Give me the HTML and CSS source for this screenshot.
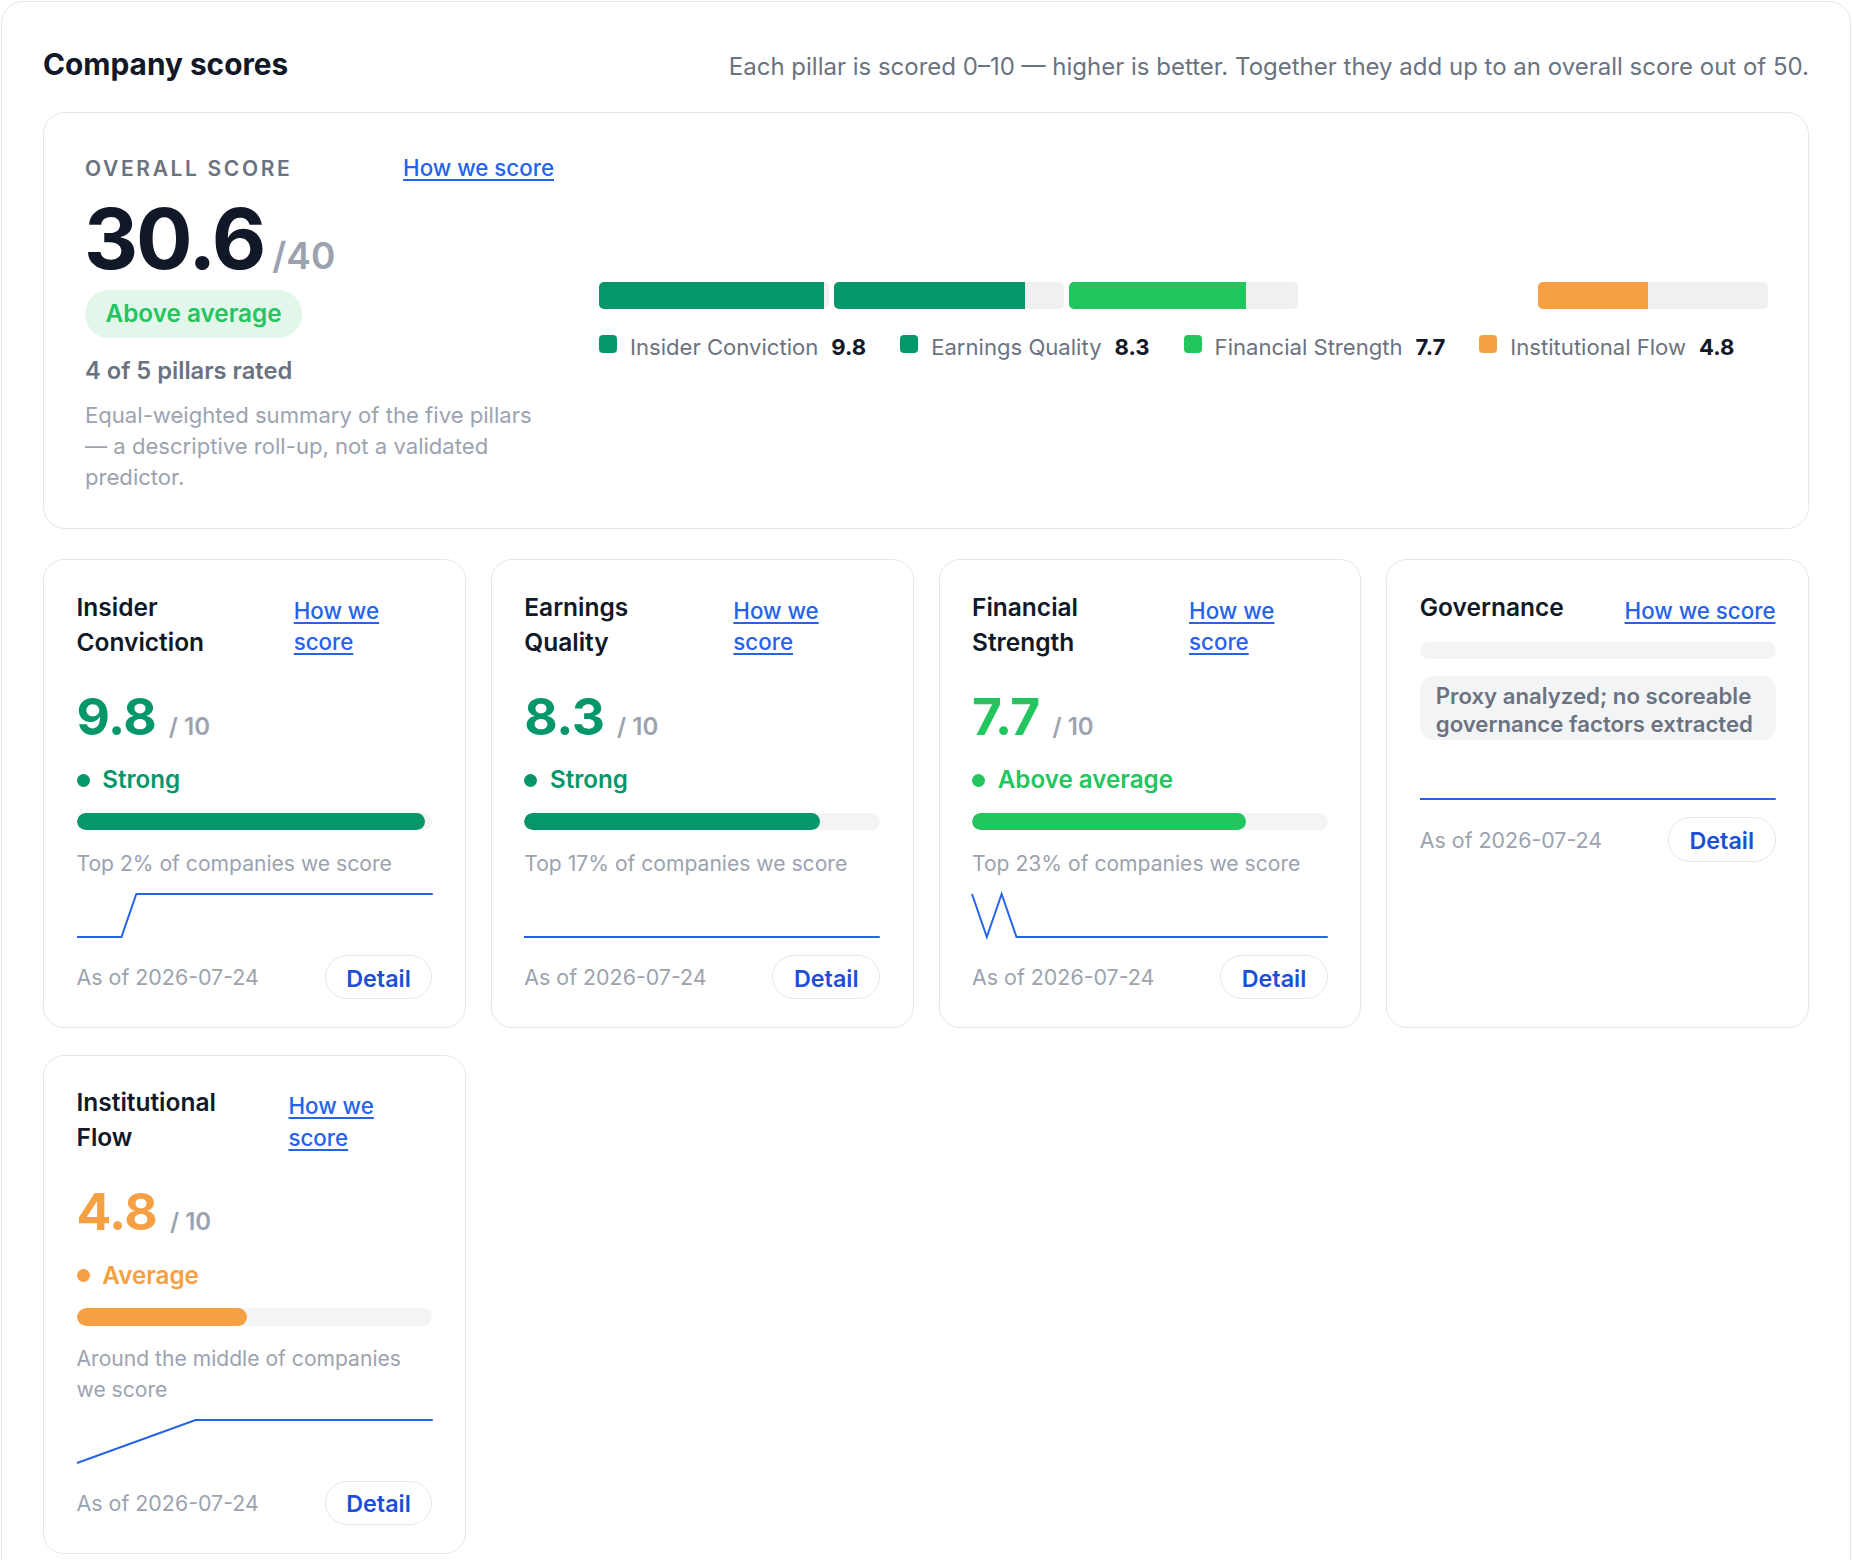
FILE: index.html
```html
<!DOCTYPE html>
<html lang="en">
<head>
<meta charset="utf-8">
<title>Company scores</title>
<link rel="stylesheet" href="styles.css">
</head>
<body>
<div class="panel">
  <div class="panel-head">
    <h2 class="panel-title">Company scores</h2>
    <p class="panel-desc">Each pillar is scored 0–10 — higher is better. Together they add up to an overall score out of 50.</p>
  </div>

  <section class="overall">
    <div class="overall-left">
      <div class="overall-top">
        <span class="eyebrow">OVERALL SCORE</span>
        <a class="how" href="#">How we score</a>
      </div>
      <div class="big-score"><span class="big-num">30.6</span><span class="big-den">/40</span></div>
      <span class="badge">Above average</span>
      <div class="rated">4 of 5 pillars rated</div>
      <p class="overall-note">Equal-weighted summary of the five pillars — a descriptive roll-up, not a validated predictor.</p>
    </div>
    <div class="overall-right">
      <div class="stack">
        <div class="seg"><div class="seg-fill c-emerald" style="width:98%"></div></div>
        <div class="seg"><div class="seg-fill c-emerald" style="width:83%"></div></div>
        <div class="seg"><div class="seg-fill c-green" style="width:77%"></div></div>
        <div class="seg seg-empty"></div>
        <div class="seg"><div class="seg-fill c-orange" style="width:48%"></div></div>
      </div>
      <div class="legend">
        <span class="lg"><i class="sw c-emerald"></i><span class="lg-label">Insider Conviction</span><b class="lg-val">9.8</b></span>
        <span class="lg"><i class="sw c-emerald"></i><span class="lg-label">Earnings Quality</span><b class="lg-val">8.3</b></span>
        <span class="lg"><i class="sw c-green"></i><span class="lg-label">Financial Strength</span><b class="lg-val">7.7</b></span>
        <span class="lg"><i class="sw c-orange"></i><span class="lg-label">Institutional Flow</span><b class="lg-val">4.8</b></span>
      </div>
    </div>
  </section>

  <div class="cards">
    <article class="card">
      <div class="card-head">
        <h3 class="card-title">Insider Conviction</h3>
        <a class="how" href="#">How we score</a>
      </div>
      <div class="score"><span class="score-num t-emerald">9.8</span><span class="score-den">/ 10</span></div>
      <div class="status t-emerald"><i class="dot c-emerald"></i>Strong</div>
      <div class="meter"><div class="meter-fill c-emerald" style="width:98%"></div></div>
      <p class="rank">Top 2% of companies we score</p>
      <svg class="spark" viewBox="0 0 24 47" preserveAspectRatio="none"><polyline points="0,45 3,45 4,2 24,2"/></svg>
      <div class="card-foot"><span class="asof">As of 2026-07-24</span><button class="detail" type="button">Detail</button></div>
    </article>

    <article class="card">
      <div class="card-head">
        <h3 class="card-title">Earnings Quality</h3>
        <a class="how" href="#">How we score</a>
      </div>
      <div class="score"><span class="score-num t-emerald">8.3</span><span class="score-den">/ 10</span></div>
      <div class="status t-emerald"><i class="dot c-emerald"></i>Strong</div>
      <div class="meter"><div class="meter-fill c-emerald" style="width:83%"></div></div>
      <p class="rank">Top 17% of companies we score</p>
      <svg class="spark" viewBox="0 0 24 47" preserveAspectRatio="none"><polyline points="0,45 24,45"/></svg>
      <div class="card-foot"><span class="asof">As of 2026-07-24</span><button class="detail" type="button">Detail</button></div>
    </article>

    <article class="card">
      <div class="card-head">
        <h3 class="card-title">Financial Strength</h3>
        <a class="how" href="#">How we score</a>
      </div>
      <div class="score"><span class="score-num t-green">7.7</span><span class="score-den">/ 10</span></div>
      <div class="status t-green"><i class="dot c-green"></i>Above average</div>
      <div class="meter"><div class="meter-fill c-green" style="width:77%"></div></div>
      <p class="rank">Top 23% of companies we score</p>
      <svg class="spark" viewBox="0 0 24 47" preserveAspectRatio="none"><polyline points="0,2 1,45 2,2 3,45 24,45"/></svg>
      <div class="card-foot"><span class="asof">As of 2026-07-24</span><button class="detail" type="button">Detail</button></div>
    </article>

    <article class="card">
      <div class="card-head">
        <h3 class="card-title">Governance</h3>
        <a class="how" href="#">How we score</a>
      </div>
      <div class="meter meter-empty"></div>
      <p class="gov-note">Proxy analyzed; no scoreable governance factors extracted</p>
      <svg class="spark spark-gov" viewBox="0 0 24 47" preserveAspectRatio="none"><polyline points="0,45 24,45"/></svg>
      <div class="card-foot foot-gov"><span class="asof">As of 2026-07-24</span><button class="detail" type="button">Detail</button></div>
    </article>

    <article class="card">
      <div class="card-head">
        <h3 class="card-title">Institutional Flow</h3>
        <a class="how" href="#">How we score</a>
      </div>
      <div class="score"><span class="score-num t-orange">4.8</span><span class="score-den">/ 10</span></div>
      <div class="status t-orange"><i class="dot c-orange"></i>Average</div>
      <div class="meter"><div class="meter-fill c-orange" style="width:48%"></div></div>
      <p class="rank">Around the middle of companies we score</p>
      <svg class="spark" viewBox="0 0 24 47" preserveAspectRatio="none"><polyline points="0,45 8,2 24,2"/></svg>
      <div class="card-foot"><span class="asof">As of 2026-07-24</span><button class="detail" type="button">Detail</button></div>
    </article>
  </div>
</div>
</body>
</html>
```

FILE: styles.css
```css
* { box-sizing: border-box; }

html, body {
  margin: 0;
  padding: 0;
  background: #ffffff;
}

body {
  font-family: Inter, "Noto Sans", "Liberation Sans", sans-serif;
  color: #111827;
}

/* colours */
.c-emerald { background: #059669; }
.c-green { background: #22c55e; }
.c-orange { background: #f5a043; }
.t-emerald { color: #059669; }
.t-green { color: #22c55e; }
.t-orange { color: #f5a043; }

.panel {
  margin: 1px 1px 0 1px;
  border: 1px solid #e5e7eb;
  border-radius: 22px;
  padding: 44.2px 41px 45px 41px;
  background: #ffffff;
}

.panel-head {
  display: flex;
  justify-content: space-between;
  align-items: baseline;
  margin-bottom: 28.3px;
}

.panel-title {
  margin: 0;
  font-size: 29.8px;
  line-height: 37px;
  font-weight: 700;
  color: #111827;
}

.panel-desc {
  margin: 0;
  font-size: 24px;
  line-height: 34px;
  color: #6b7280;
}

.how {
  color: #2563eb;
  font-size: 22.3px;
  line-height: 31.5px;
  font-weight: 500;
  text-decoration: underline;
  text-underline-offset: 3px;
  text-decoration-thickness: 1.5px;
}

/* overall card */
.overall {
  display: grid;
  grid-template-columns: 469px 1fr;
  column-gap: 45px;
  align-items: center;
  border: 1px solid #e5e7eb;
  border-radius: 22px;
  padding: 38.9px 40px 35px 41px;
}

.overall-left {
  display: flex;
  flex-direction: column;
  align-items: flex-start;
}

.overall-top {
  align-self: stretch;
  display: flex;
  justify-content: space-between;
  align-items: baseline;
}

.eyebrow {
  font-size: 21px;
  line-height: 31.5px;
  font-weight: 600;
  letter-spacing: 2.65px;
  color: #6b7280;
}

.big-score {
  margin-top: 12.3px;
  display: flex;
  align-items: baseline;
  gap: 8.2px;
}

.big-num {
  font-size: 84px;
  line-height: 84px;
  font-weight: 700;
  letter-spacing: -0.025em;
  color: #111827;
  margin-left: -1px;
}

.big-den {
  font-size: 37px;
  line-height: 37px;
  font-weight: 600;
  color: #9ca3af;
}

.badge {
  margin-top: 9.3px;
  padding: 6px 20.5px;
  line-height: 35.5px;
  font-size: 24.3px;
  font-weight: 600;
  color: #22c55e;
  background: #e3f6ea;
  border-radius: 999px;
}

.rated {
  margin-top: 16.9px;
  font-size: 23.7px;
  line-height: 31.5px;
  font-weight: 600;
  color: #6b7280;
}

.overall-note {
  margin: 13.6px 0 0 0;
  font-size: 22.1px;
  line-height: 31px;
  color: #9ca3af;
}

.stack {
  display: flex;
  gap: 5px;
  height: 27px;
}

.seg {
  flex: 1 1 0;
  background: #eff0f2;
  border-radius: 5px;
  overflow: hidden;
}

.seg-empty { background: transparent; }

.seg-fill { height: 100%; }

.legend {
  display: flex;
  column-gap: 34px;
  margin-top: 22.2px;
  font-size: 22.1px;
  line-height: 31.5px;
  white-space: nowrap;
}

.lg {
  display: flex;
  align-items: flex-start;
  gap: 13px;
}

.sw {
  display: block;
  width: 18px;
  height: 18px;
  border-radius: 4px;
  margin-top: 3.8px;
}

.lg-label { color: #6b7280; }

.lg-val {
  font-weight: 700;
  color: #111827;
}

/* pillar cards */
.cards {
  display: grid;
  grid-template-columns: repeat(4, 1fr);
  column-gap: 25px;
  row-gap: 27px;
  margin-top: 30.3px;
}

.card {
  border: 1px solid #e5e7eb;
  border-radius: 21px;
  padding: 29.3px 32.5px 27.5px 32.5px;
  display: flex;
  flex-direction: column;
}

.card-head {
  display: flex;
  justify-content: space-between;
  align-items: flex-start;
  gap: 20px;
}

.card-title {
  margin: 0;
  font-size: 24.5px;
  line-height: 35px;
  font-weight: 600;
  color: #111827;
}

.card-head .how { margin-top: 5.2px; }

.score {
  margin-top: 31.2px;
  display: flex;
  align-items: baseline;
  gap: 12.7px;
}

.score-num {
  font-size: 51.5px;
  line-height: 51.5px;
  font-weight: 700;
  letter-spacing: -0.01em;
}

.score-den {
  font-size: 24px;
  line-height: 24px;
  font-weight: 600;
  color: #9ca3af;
}

.status {
  margin-top: 23.2px;
  display: flex;
  align-items: center;
  gap: 12.7px;
  font-size: 24.2px;
  line-height: 30px;
  font-weight: 600;
}

.dot {
  display: block;
  width: 13px;
  height: 13px;
  border-radius: 50%;
}

.meter {
  margin-top: 17.5px;
  height: 17.5px;
  background: #f3f4f6;
  border-radius: 999px;
  overflow: hidden;
}

.meter-fill {
  height: 100%;
  border-radius: 999px;
}

.meter-empty { margin-top: 15.7px; }

.rank {
  margin: 18.3px 0 0 0;
  font-size: 21.1px;
  line-height: 30.4px;
  color: #9ca3af;
}

.gov-note {
  margin: 16.3px 0 0 0;
  padding: 6px 16px 0 16px;
  height: 64px;
  background: #f3f4f6;
  border-radius: 14px;
  font-size: 22.2px;
  line-height: 28.6px;
  font-weight: 600;
  color: #6b7280;
}

.spark {
  display: block;
  margin-top: 13.1px;
  width: 100%;
  height: 47px;
  overflow: visible;
}

.spark-gov { margin-top: 14.4px; }

.spark polyline {
  fill: none;
  stroke: #2563eb;
  stroke-width: 2px;
  stroke-linejoin: miter;
  vector-effect: non-scaling-stroke;
}

.card-foot {
  margin-top: 15.7px;
  display: flex;
  justify-content: space-between;
  align-items: center;
}

.foot-gov { margin-top: 16.3px; }

.asof {
  font-size: 21.4px;
  line-height: 30px;
  color: #9ca3af;
}

.detail {
  height: 44.3px;
  padding: 2px 20.5px 0 20.5px;
  font-family: inherit;
  font-size: 23.3px;
  font-weight: 600;
  color: #1d4ed8;
  background: #ffffff;
  border: 1.5px solid #e5e7eb;
  border-radius: 22px;
  cursor: pointer;
}
```
